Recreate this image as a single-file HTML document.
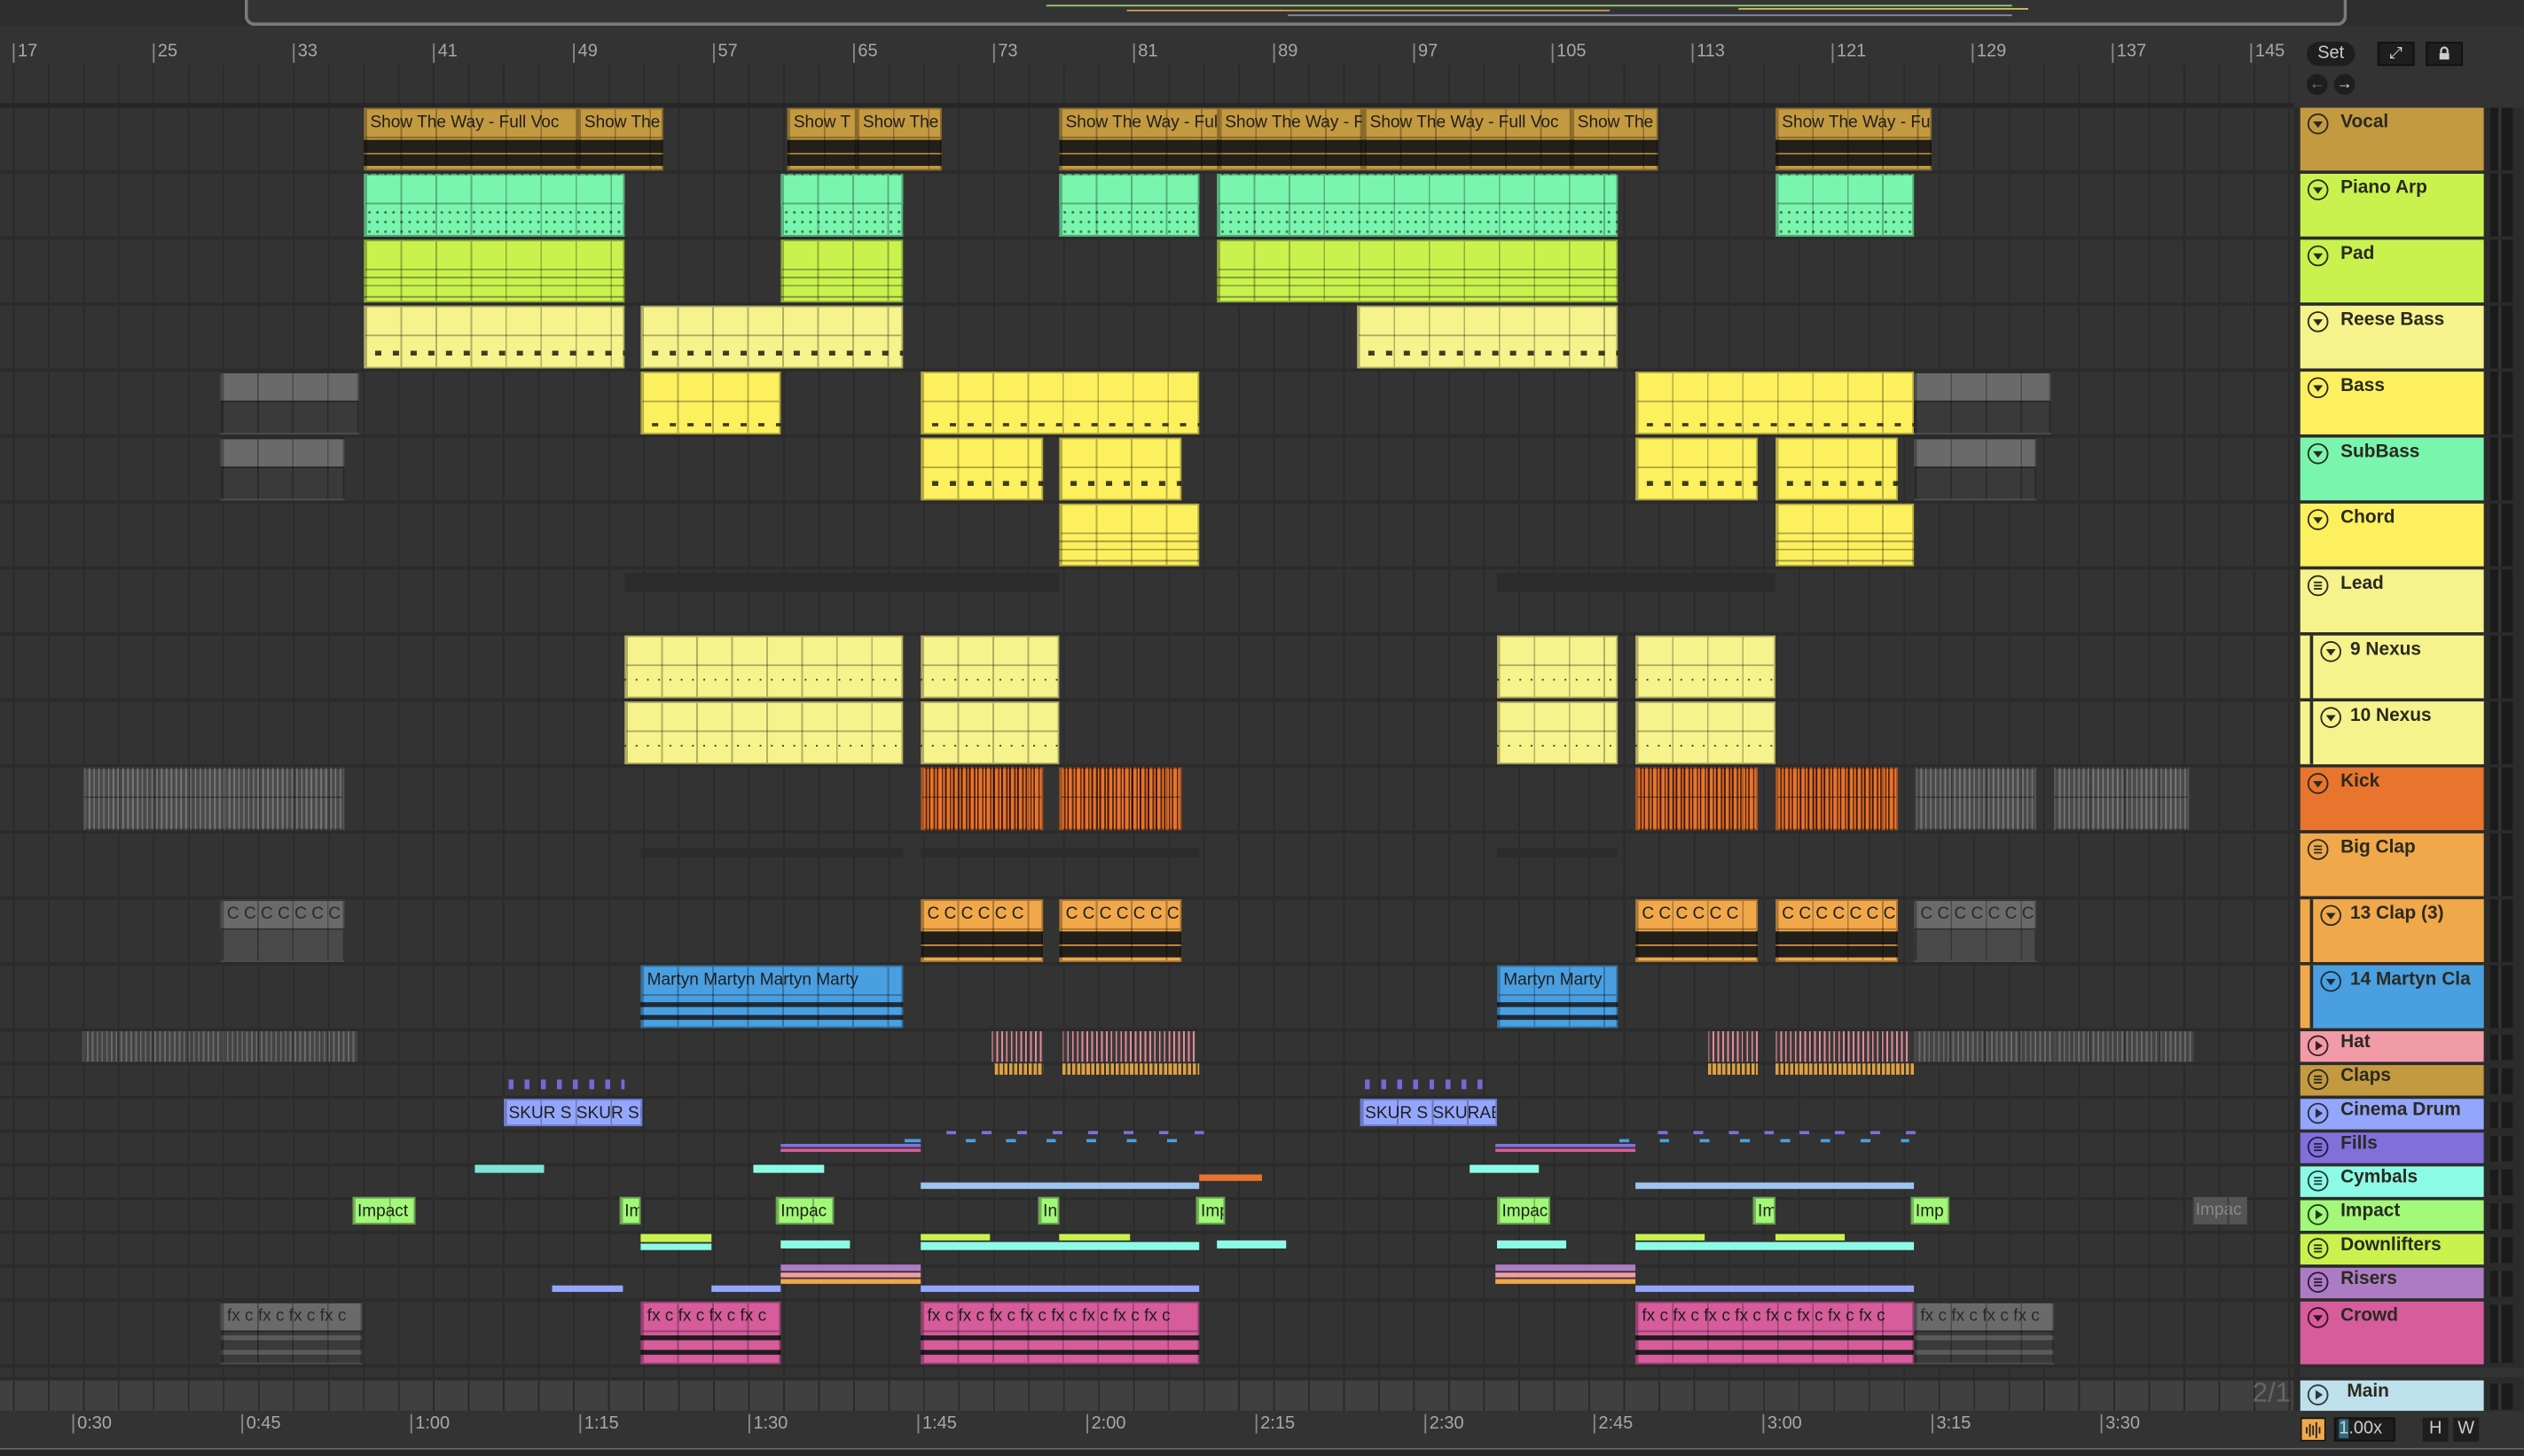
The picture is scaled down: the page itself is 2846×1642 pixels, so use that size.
<!DOCTYPE html>
<html><head><meta charset="utf-8"><style>
*{margin:0;padding:0}
html,body{width:2846px;height:1642px;overflow:hidden;background:#2b2b2b}
#s{position:absolute;left:0;top:0;width:1568px;height:905px;transform:scale(1.81505,1.81436);transform-origin:0 0;background:#2b2b2b;font-family:"Liberation Sans",sans-serif}
.a{position:absolute;box-sizing:border-box}
.lane{position:absolute;left:0;width:1425px;background:#333 repeating-linear-gradient(90deg,#2a2a2a 0 1px,transparent 1px 21.75px);background-position:8px 0}
.c{position:absolute;box-sizing:border-box;overflow:hidden;white-space:nowrap;font-size:10.5px;line-height:16px;color:#1e1e1e;padding-left:3px;border:1px solid rgba(0,0,0,.3);height:39px}
.c::before{content:"";position:absolute;left:0;right:0;top:0;bottom:0;background:repeating-linear-gradient(90deg,rgba(0,0,0,.28) 0 1px,transparent 1px 21.75px)}
.c::after{content:"";position:absolute;left:0;right:0;top:17px;height:1px;background:rgba(0,0,0,.3)}
.au{background-image:linear-gradient(transparent 0 19px,#231f1a 19px 27px,transparent 27px 28px,#231f1a 28px 35px,transparent 35px)}
.mi{background-image:repeating-linear-gradient(90deg,transparent 0 6px,rgba(0,0,0,.75) 6px 10px,transparent 10px 11px)}
.mi2{background-image:linear-gradient(transparent 0 22px,rgba(0,0,0,.35) 22px 23px,transparent 23px 27px,rgba(0,0,0,.35) 27px 28px,transparent 28px 34px,rgba(0,0,0,.35) 34px 35px,transparent 35px)}
.dots{background-image:linear-gradient(#7af5ae 0 18px,transparent 18px),radial-gradient(circle,rgba(0,0,0,.5) 0.7px,transparent 1px);background-size:100% 100%,5px 6px;background-position:0 0,0 20px}
.g{background-color:#5c5c5c!important;color:#2a2a2a}
.st{height:19px;border:none;padding:0}
.st::after{display:none}
.b{position:absolute;height:4px}
.h{position:absolute;left:1429px;width:114px;box-sizing:border-box;font-weight:bold;font-size:11.5px;color:#2a2a20;padding-left:25px;line-height:19px}
.h svg{position:absolute;left:4px;top:3px}
.m{position:absolute;left:1547px;width:14px;background:repeating-linear-gradient(90deg,#1b1b1b 0 5px,#333 5px 7px,#1b1b1b 7px 12px,transparent 12px)}
.rn{position:absolute;top:27px;font-family:"Liberation Sans Narrow","Liberation Sans",sans-serif;font-size:11px;color:#a8a8a8;border-left:1px solid #888;padding-left:2px;line-height:11px;height:12px}
.bt{position:absolute;top:879px;font-family:"Liberation Sans Narrow","Liberation Sans",sans-serif;font-size:11px;color:#a8a8a8;border-left:1px solid #888;padding-left:2px;line-height:12px}
</style></head><body><div id="s">

<div class="a" style="left:0;top:0;width:1568px;height:16px;background:#2d2d2d"></div>
<div class="a" style="left:152px;top:0;width:1306px;height:16px;border:2px solid #7a7a7a;border-top:none;border-radius:0 0 6px 6px;background:#333"></div>
<div class="a" style="left:650px;top:3px;width:600px;height:1px;background:#9c7"></div>
<div class="a" style="left:700px;top:6px;width:300px;height:1px;background:#c9a050"></div>
<div class="a" style="left:800px;top:9px;width:450px;height:1px;background:#88a"></div>
<div class="a" style="left:1080px;top:5px;width:180px;height:1px;background:#d8c060"></div>

<div class="a" style="left:0;top:16px;width:1425px;height:50px;background:#333 repeating-linear-gradient(90deg,#2a2a2a 0 1px,transparent 1px 21.75px);background-position:8px 0"></div>
<div class="a" style="left:0;top:16px;width:1425px;height:24px;background:#333"></div>
<div class="a" style="left:0;top:64px;width:1568px;height:3px;background:#262626"></div>
<div class="rn" style="left:8px">17</div><div class="rn" style="left:95px">25</div><div class="rn" style="left:182px">33</div><div class="rn" style="left:269px">41</div><div class="rn" style="left:356px">49</div><div class="rn" style="left:443px">57</div><div class="rn" style="left:530px">65</div><div class="rn" style="left:617px">73</div><div class="rn" style="left:704px">81</div><div class="rn" style="left:791px">89</div><div class="rn" style="left:878px">97</div><div class="rn" style="left:964px">105</div><div class="rn" style="left:1051px">113</div><div class="rn" style="left:1138px">121</div><div class="rn" style="left:1225px">129</div><div class="rn" style="left:1312px">137</div><div class="rn" style="left:1398px">145</div>

<div class="a" style="left:1425px;top:16px;width:143px;height:51px;background:#333"></div>
<div class="a" style="left:1433px;top:26px;width:30px;height:15px;background:#1e1e1e;border-radius:8px;color:#ccc;font-size:11px;line-height:15px;text-align:center">Set</div>
<div class="a" style="left:1477px;top:26px;width:23px;height:15px;background:#1e1e1e;border:1px solid #111;color:#ddd;font-size:10px;line-height:13px;text-align:center">⤢</div>
<div class="a" style="left:1507px;top:26px;width:23px;height:15px;background:#1e1e1e;border:1px solid #111"><svg width="21" height="13" viewBox="0 0 21 13"><rect x="7.5" y="6" width="6" height="4" fill="#ccc"/><path d="M8.5 6V4.5a2 2 0 0 1 4 0V6" stroke="#ccc" fill="none" stroke-width="1.2"/></svg></div>
<div class="a" style="left:1433px;top:46px;width:13px;height:13px;background:#1e1e1e;border-radius:50%;color:#777;font-size:10px;line-height:13px;text-align:center">←</div>
<div class="a" style="left:1450px;top:46px;width:13px;height:13px;background:#1e1e1e;border-radius:50%;color:#ddd;font-size:10px;line-height:13px;text-align:center">→</div>

<div class="lane" style="top:67px;height:39px"></div>
<div class="lane" style="top:108px;height:39px"></div>
<div class="lane" style="top:149px;height:39px"></div>
<div class="lane" style="top:190px;height:39px"></div>
<div class="lane" style="top:231px;height:39px"></div>
<div class="lane" style="top:272px;height:39px"></div>
<div class="lane" style="top:313px;height:39px"></div>
<div class="lane" style="top:354px;height:39px"></div>
<div class="lane" style="top:395px;height:39px"></div>
<div class="lane" style="top:436px;height:39px"></div>
<div class="lane" style="top:477px;height:39px"></div>
<div class="lane" style="top:518px;height:39px"></div>
<div class="lane" style="top:559px;height:39px"></div>
<div class="lane" style="top:600px;height:39px"></div>
<div class="lane" style="top:641px;height:19px"></div>
<div class="lane" style="top:662px;height:19px"></div>
<div class="lane" style="top:683px;height:19px"></div>
<div class="lane" style="top:704px;height:19px"></div>
<div class="lane" style="top:725px;height:19px"></div>
<div class="lane" style="top:746px;height:19px"></div>
<div class="lane" style="top:767px;height:19px"></div>
<div class="lane" style="top:788px;height:19px"></div>
<div class="lane" style="top:809px;height:39px"></div>
<div class="lane" style="top:850px;height:6px"></div>
<div class="lane" style="top:858px;height:19px;background-color:#404040"></div>
<div class="a" style="left:1375px;top:856px;width:48px;height:20px;color:#666;font-size:17px;text-align:right">2/1</div>

<!-- Vocal -->
<div class="c au" style="left:226px;top:67px;width:133px;background-color:#c49a41">Show The Way - Full Voc</div>
<div class="c au" style="left:359px;top:67px;width:53px;background-color:#c49a41">Show The</div>
<div class="c au" style="left:489px;top:67px;width:43px;background-color:#c49a41">Show T</div>
<div class="c au" style="left:532px;top:67px;width:53px;background-color:#c49a41">Show The</div>
<div class="c au" style="left:658px;top:67px;width:99px;background-color:#c49a41">Show The Way - Full</div>
<div class="c au" style="left:757px;top:67px;width:90px;background-color:#c49a41">Show The Way - Full</div>
<div class="c au" style="left:847px;top:67px;width:129px;background-color:#c49a41">Show The Way - Full Voc</div>
<div class="c au" style="left:976px;top:67px;width:54px;background-color:#c49a41">Show The</div>
<div class="c au" style="left:1103px;top:67px;width:97px;background-color:#c49a41">Show The Way - Full</div>

<!-- Piano Arp -->
<div class="c dots" style="left:226px;top:108px;width:162px;background-color:#7af5ae"></div>
<div class="c dots" style="left:485px;top:108px;width:76px;background-color:#7af5ae"></div>
<div class="c dots" style="left:658px;top:108px;width:87px;background-color:#7af5ae"></div>
<div class="c dots" style="left:756px;top:108px;width:249px;background-color:#7af5ae"></div>
<div class="c dots" style="left:1103px;top:108px;width:86px;background-color:#7af5ae"></div>

<!-- Pad -->
<div class="c mi2" style="left:226px;top:149px;width:162px;background-color:#c9f24f"></div>
<div class="c mi2" style="left:485px;top:149px;width:76px;background-color:#c9f24f"></div>
<div class="c mi2" style="left:756px;top:149px;width:249px;background-color:#c9f24f"></div>

<!-- Reese -->
<div class="c mi" style="left:226px;top:190px;width:162px;background-color:#f6f38c;background-size:11px 3px;background-repeat:repeat-x;background-position:0 27px"></div>
<div class="c mi" style="left:398px;top:190px;width:163px;background-color:#f6f38c;background-size:11px 3px;background-repeat:repeat-x;background-position:0 27px"></div>
<div class="c mi" style="left:843px;top:190px;width:162px;background-color:#f6f38c;background-size:11px 3px;background-repeat:repeat-x;background-position:0 27px"></div>

<!-- Bass -->
<div class="c g" style="left:137px;top:231px;width:86px;background:linear-gradient(#6a6a6a 0 17px,#3a3a3a 17px)"></div>
<div class="c mi" style="left:398px;top:231px;width:87px;background-color:#fdf05e;background-size:11px 2px;background-repeat:repeat-x;background-position:0 31px"></div>
<div class="c mi" style="left:572px;top:231px;width:173px;background-color:#fdf05e;background-size:11px 2px;background-repeat:repeat-x;background-position:0 31px"></div>
<div class="c mi" style="left:1016px;top:231px;width:173px;background-color:#fdf05e;background-size:11px 2px;background-repeat:repeat-x;background-position:0 31px"></div>
<div class="c g" style="left:1189px;top:231px;width:85px;background:linear-gradient(#6a6a6a 0 17px,#3a3a3a 17px)"></div>

<!-- SubBass -->
<div class="c g" style="left:137px;top:272px;width:77px;background:linear-gradient(#6a6a6a 0 17px,#3a3a3a 17px)"></div>
<div class="c mi" style="left:572px;top:272px;width:76px;background-color:#fdf05e;background-size:11px 3px;background-repeat:repeat-x;background-position:0 26px"></div>
<div class="c mi" style="left:658px;top:272px;width:76px;background-color:#fdf05e;background-size:11px 3px;background-repeat:repeat-x;background-position:0 26px"></div>
<div class="c mi" style="left:1016px;top:272px;width:76px;background-color:#fdf05e;background-size:11px 3px;background-repeat:repeat-x;background-position:0 26px"></div>
<div class="c mi" style="left:1103px;top:272px;width:76px;background-color:#fdf05e;background-size:11px 3px;background-repeat:repeat-x;background-position:0 26px"></div>
<div class="c g" style="left:1189px;top:272px;width:76px;background:linear-gradient(#6a6a6a 0 17px,#3a3a3a 17px)"></div>

<!-- Chord -->
<div class="c mi2" style="left:658px;top:313px;width:87px;background-color:#fdf05e"></div>
<div class="c mi2" style="left:1103px;top:313px;width:86px;background-color:#fdf05e"></div>

<div class="a" style="left:388px;top:356px;width:270px;height:12px;background:#2c2c2c"></div>
<div class="a" style="left:930px;top:356px;width:173px;height:12px;background:#2c2c2c"></div>

<!-- Nexus -->
<div class="c mi" style="left:388px;top:395px;width:173px;background-color:#f6f38c;background-size:7px 1px;background-repeat:repeat-x;background-position:0 26px"></div>
<div class="c mi" style="left:572px;top:395px;width:86px;background-color:#f6f38c;background-size:7px 1px;background-repeat:repeat-x;background-position:0 26px"></div>
<div class="c mi" style="left:930px;top:395px;width:75px;background-color:#f6f38c;background-size:7px 1px;background-repeat:repeat-x;background-position:0 26px"></div>
<div class="c mi" style="left:1016px;top:395px;width:87px;background-color:#f6f38c;background-size:7px 1px;background-repeat:repeat-x;background-position:0 26px"></div>
<div class="c mi" style="left:388px;top:436px;width:173px;background-color:#f6f38c;background-size:7px 1px;background-repeat:repeat-x;background-position:0 26px"></div>
<div class="c mi" style="left:572px;top:436px;width:86px;background-color:#f6f38c;background-size:7px 1px;background-repeat:repeat-x;background-position:0 26px"></div>
<div class="c mi" style="left:930px;top:436px;width:75px;background-color:#f6f38c;background-size:7px 1px;background-repeat:repeat-x;background-position:0 26px"></div>
<div class="c mi" style="left:1016px;top:436px;width:87px;background-color:#f6f38c;background-size:7px 1px;background-repeat:repeat-x;background-position:0 26px"></div>

<!-- Kick -->
<div class="c" style="left:51px;top:477px;width:163px;background:repeating-linear-gradient(90deg,#777 0 1px,#4a4a4a 1px 3px)"></div>
<div class="c" style="left:572px;top:477px;width:76px;background:repeating-linear-gradient(90deg,#e8742e 0 2px,#5a2a10 2px 3px,#e8742e 3px 4px,#3a1a08 4px 5px)"></div>
<div class="c" style="left:658px;top:477px;width:76px;background:repeating-linear-gradient(90deg,#e8742e 0 2px,#5a2a10 2px 3px,#e8742e 3px 4px,#3a1a08 4px 5px)"></div>
<div class="c" style="left:1016px;top:477px;width:76px;background:repeating-linear-gradient(90deg,#e8742e 0 2px,#5a2a10 2px 3px,#e8742e 3px 4px,#3a1a08 4px 5px)"></div>
<div class="c" style="left:1103px;top:477px;width:76px;background:repeating-linear-gradient(90deg,#e8742e 0 2px,#5a2a10 2px 3px,#e8742e 3px 4px,#3a1a08 4px 5px)"></div>
<div class="c" style="left:1189px;top:477px;width:76px;background:repeating-linear-gradient(90deg,#777 0 1px,#4a4a4a 1px 3px)"></div>
<div class="c" style="left:1275px;top:477px;width:85px;background:repeating-linear-gradient(90deg,#777 0 1px,#4a4a4a 1px 3px)"></div>

<div class="a" style="left:398px;top:527px;width:163px;height:6px;background:#2c2c2c"></div>
<div class="a" style="left:572px;top:527px;width:173px;height:6px;background:#2c2c2c"></div>
<div class="a" style="left:930px;top:527px;width:75px;height:6px;background:#2c2c2c"></div>

<!-- 13 Clap -->
<div class="c g au" style="left:137px;top:559px;width:77px;background:linear-gradient(#6a6a6a 0 17px,#4a4a4a 17px)">C C C C C C C</div>
<div class="c au" style="left:572px;top:559px;width:76px;background-color:#f0a84a">C C C C C C</div>
<div class="c au" style="left:658px;top:559px;width:76px;background-color:#f0a84a">C C C C C C C</div>
<div class="c au" style="left:1016px;top:559px;width:76px;background-color:#f0a84a">C C C C C C</div>
<div class="c au" style="left:1103px;top:559px;width:76px;background-color:#f0a84a">C C C C C C C</div>
<div class="c g" style="left:1189px;top:559px;width:76px;background:linear-gradient(#6a6a6a 0 17px,#4a4a4a 17px)">C C C C C C C</div>

<!-- Martyn -->
<div class="c" style="left:398px;top:600px;width:163px;background:linear-gradient(#4a9fe0 0 22px,#1e2a36 22px 25px,#4a9fe0 25px 30px,#1e2a36 30px 33px,#4a9fe0 33px)">Martyn Martyn Martyn Marty</div>
<div class="c" style="left:930px;top:600px;width:75px;background:linear-gradient(#4a9fe0 0 22px,#1e2a36 22px 25px,#4a9fe0 25px 30px,#1e2a36 30px 33px,#4a9fe0 33px)">Martyn Marty</div>

<!-- Hat -->
<div class="c st" style="left:51px;top:641px;width:171px;background:repeating-linear-gradient(90deg,#6a6a6a 0 1px,#444 1px 3px)"></div>
<div class="c st" style="left:616px;top:641px;width:32px;background:repeating-linear-gradient(90deg,#e58a98 0 1px,#3a3a3a 1px 3px)"></div>
<div class="c st" style="left:660px;top:641px;width:83px;background:repeating-linear-gradient(90deg,#e58a98 0 1px,#3a3a3a 1px 3px)"></div>
<div class="c st" style="left:1061px;top:641px;width:31px;background:repeating-linear-gradient(90deg,#e58a98 0 1px,#3a3a3a 1px 3px)"></div>
<div class="c st" style="left:1103px;top:641px;width:84px;background:repeating-linear-gradient(90deg,#e58a98 0 1px,#3a3a3a 1px 3px)"></div>
<div class="c st" style="left:1189px;top:641px;width:174px;background:repeating-linear-gradient(90deg,#6a6a6a 0 1px,#444 1px 3px)"></div>

<!-- Claps -->
<div class="b" style="left:618px;top:661px;width:30px;height:7px;background:repeating-linear-gradient(90deg,#e0a040 0 2px,#333 2px 3px)"></div>
<div class="b" style="left:660px;top:661px;width:85px;height:7px;background:repeating-linear-gradient(90deg,#e0a040 0 2px,#333 2px 3px)"></div>
<div class="b" style="left:1061px;top:661px;width:31px;height:7px;background:repeating-linear-gradient(90deg,#e0a040 0 2px,#333 2px 3px)"></div>
<div class="b" style="left:1103px;top:661px;width:86px;height:7px;background:repeating-linear-gradient(90deg,#e0a040 0 2px,#333 2px 3px)"></div>

<!-- Cinema -->
<div class="b" style="left:316px;top:671px;width:72px;height:6px;background:repeating-linear-gradient(90deg,#7a66d8 0 3px,transparent 3px 10px)"></div>
<div class="b" style="left:848px;top:671px;width:80px;height:6px;background:repeating-linear-gradient(90deg,#7a66d8 0 3px,transparent 3px 10px)"></div>
<div class="c st" style="left:313px;top:683px;width:86px;height:17px;background:#94a6fc;border:1px solid #6a7ad0;padding-left:2px;font-size:10.5px">SKUR S SKUR SK</div>
<div class="c st" style="left:845px;top:683px;width:85px;height:17px;background:#94a6fc;border:1px solid #6a7ad0;padding-left:2px;font-size:10.5px">SKUR S SKURAE</div>

<!-- Fills -->
<div class="b" style="left:485px;top:711px;width:87px;height:2px;background:#8170dc"></div>
<div class="b" style="left:485px;top:714px;width:87px;height:2px;background:#d65c9c"></div>
<div class="b" style="left:929px;top:711px;width:87px;height:2px;background:#8170dc"></div>
<div class="b" style="left:929px;top:714px;width:87px;height:2px;background:#d65c9c"></div>
<div class="b" style="left:562px;top:708px;width:10px;height:2px;background:#4a9fe0"></div>
<div class="b" style="left:588px;top:703px;width:160px;height:2px;background:repeating-linear-gradient(90deg,#8170dc 0 6px,transparent 6px 22px)"></div>
<div class="b" style="left:600px;top:708px;width:150px;height:2px;background:repeating-linear-gradient(90deg,#4a9fe0 0 6px,transparent 6px 25px)"></div>
<div class="b" style="left:1030px;top:703px;width:160px;height:2px;background:repeating-linear-gradient(90deg,#8170dc 0 6px,transparent 6px 22px)"></div>
<div class="b" style="left:1006px;top:708px;width:180px;height:2px;background:repeating-linear-gradient(90deg,#4a9fe0 0 6px,transparent 6px 25px)"></div>

<!-- Cymbals -->
<div class="b" style="left:295px;top:724px;width:43px;height:5px;background:#7ee6d4"></div>
<div class="b" style="left:468px;top:724px;width:44px;height:5px;background:#8cfbe6"></div>
<div class="b" style="left:913px;top:724px;width:43px;height:5px;background:#8cfbe6"></div>
<div class="b" style="left:745px;top:730px;width:39px;height:4px;background:#e8742e"></div>
<div class="b" style="left:572px;top:735px;width:173px;height:4px;background:#9ec4f0"></div>
<div class="b" style="left:1016px;top:735px;width:173px;height:4px;background:#9ec4f0"></div>

<!-- Impact -->
<div class="c st" style="left:219px;top:744px;width:39px;height:17px;background:#a2f878;border:1px solid #6aa050;padding-left:2px">Impact</div>
<div class="c st" style="left:385px;top:744px;width:13px;height:17px;background:#a2f878;border:1px solid #6aa050;padding-left:2px">Im</div>
<div class="c st" style="left:482px;top:744px;width:36px;height:17px;background:#a2f878;border:1px solid #6aa050;padding-left:2px">Impac</div>
<div class="c st" style="left:645px;top:744px;width:13px;height:17px;background:#a2f878;border:1px solid #6aa050;padding-left:2px">In</div>
<div class="c st" style="left:743px;top:744px;width:18px;height:17px;background:#a2f878;border:1px solid #6aa050;padding-left:2px">Imp</div>
<div class="c st" style="left:930px;top:744px;width:33px;height:17px;background:#a2f878;border:1px solid #6aa050;padding-left:2px">Impac</div>
<div class="c st" style="left:1089px;top:744px;width:14px;height:17px;background:#a2f878;border:1px solid #6aa050;padding-left:2px">Im</div>
<div class="c st" style="left:1187px;top:744px;width:24px;height:17px;background:#a2f878;border:1px solid #6aa050;padding-left:2px">Imp</div>
<div class="c st" style="left:1362px;top:744px;width:34px;height:17px;background:#555;color:#888;padding-left:2px">Impac</div>

<!-- Downlifters -->
<div class="b" style="left:398px;top:767px;width:44px;height:5px;background:#c9f24f"></div>
<div class="b" style="left:398px;top:773px;width:44px;height:4px;background:#8cfbe6"></div>
<div class="b" style="left:485px;top:771px;width:43px;height:5px;background:#8cfbe6"></div>
<div class="b" style="left:572px;top:767px;width:43px;height:4px;background:#c9f24f"></div>
<div class="b" style="left:658px;top:767px;width:44px;height:4px;background:#c9f24f"></div>
<div class="b" style="left:572px;top:772px;width:173px;height:5px;background:#8cfbe6"></div>
<div class="b" style="left:756px;top:771px;width:43px;height:5px;background:#8cfbe6"></div>
<div class="b" style="left:930px;top:771px;width:43px;height:5px;background:#8cfbe6"></div>
<div class="b" style="left:1016px;top:767px;width:43px;height:4px;background:#c9f24f"></div>
<div class="b" style="left:1103px;top:767px;width:43px;height:4px;background:#c9f24f"></div>
<div class="b" style="left:1016px;top:772px;width:173px;height:5px;background:#8cfbe6"></div>

<!-- Risers -->
<div class="b" style="left:343px;top:799px;width:44px;height:4px;background:#94a6fc"></div>
<div class="b" style="left:442px;top:799px;width:43px;height:4px;background:#94a6fc"></div>
<div class="b" style="left:485px;top:786px;width:87px;height:4px;background:#ad7bc4"></div>
<div class="b" style="left:485px;top:791px;width:87px;height:3px;background:#f19ba6"></div>
<div class="b" style="left:485px;top:795px;width:87px;height:3px;background:#f0a84a"></div>
<div class="b" style="left:929px;top:786px;width:87px;height:4px;background:#ad7bc4"></div>
<div class="b" style="left:929px;top:791px;width:87px;height:3px;background:#f19ba6"></div>
<div class="b" style="left:929px;top:795px;width:87px;height:3px;background:#f0a84a"></div>
<div class="b" style="left:572px;top:799px;width:173px;height:4px;background:#94a6fc"></div>
<div class="b" style="left:1016px;top:799px;width:173px;height:4px;background:#94a6fc"></div>

<!-- Crowd -->
<div class="c g" style="left:137px;top:809px;width:88px;background:linear-gradient(#6a6a6a 0 17px,#3a3a3a 17px 20px,#5a5a5a 20px 23px,#3a3a3a 23px 29px,#5a5a5a 29px 32px,#3a3a3a 32px);color:#2a2a2a">fx c fx c fx c fx c</div>
<div class="c" style="left:398px;top:809px;width:87px;background:linear-gradient(#d65c9c 0 20px,#1e1e1e 20px 23px,#d65c9c 23px 29px,#1e1e1e 29px 32px,#d65c9c 32px)">fx c fx c fx c fx c</div>
<div class="c" style="left:572px;top:809px;width:173px;background:linear-gradient(#d65c9c 0 20px,#1e1e1e 20px 23px,#d65c9c 23px 29px,#1e1e1e 29px 32px,#d65c9c 32px)">fx c fx c fx c fx c fx c fx c fx c fx c</div>
<div class="c" style="left:1016px;top:809px;width:173px;background:linear-gradient(#d65c9c 0 20px,#1e1e1e 20px 23px,#d65c9c 23px 29px,#1e1e1e 29px 32px,#d65c9c 32px)">fx c fx c fx c fx c fx c fx c fx c fx c</div>
<div class="c g" style="left:1189px;top:809px;width:87px;background:linear-gradient(#6a6a6a 0 17px,#3a3a3a 17px 20px,#5a5a5a 20px 23px,#3a3a3a 23px 29px,#5a5a5a 29px 32px,#3a3a3a 32px)">fx c fx c fx c fx c</div>

<!-- headers -->
<div class="a" style="left:1425px;top:67px;width:143px;height:812px;background:#2b2b2b"></div>
<div class="h" style="top:67px;height:39px;background:#c49a41"><svg width="14" height="14"><circle cx="7" cy="7" r="6" fill="none" stroke="#2a2a20"/><path d="M4 5.5h6L7 9.5z" fill="#2a2a20"/></svg>Vocal</div>
<div class="h" style="top:108px;height:39px;background:#c9f24f"><svg width="14" height="14"><circle cx="7" cy="7" r="6" fill="none" stroke="#2a2a20"/><path d="M4 5.5h6L7 9.5z" fill="#2a2a20"/></svg>Piano Arp</div>
<div class="h" style="top:149px;height:39px;background:#c9f24f"><svg width="14" height="14"><circle cx="7" cy="7" r="6" fill="none" stroke="#2a2a20"/><path d="M4 5.5h6L7 9.5z" fill="#2a2a20"/></svg>Pad</div>
<div class="h" style="top:190px;height:39px;background:#f6f38c"><svg width="14" height="14"><circle cx="7" cy="7" r="6" fill="none" stroke="#2a2a20"/><path d="M4 5.5h6L7 9.5z" fill="#2a2a20"/></svg>Reese Bass</div>
<div class="h" style="top:231px;height:39px;background:#fdf05e"><svg width="14" height="14"><circle cx="7" cy="7" r="6" fill="none" stroke="#2a2a20"/><path d="M4 5.5h6L7 9.5z" fill="#2a2a20"/></svg>Bass</div>
<div class="h" style="top:272px;height:39px;background:#7af5ae"><svg width="14" height="14"><circle cx="7" cy="7" r="6" fill="none" stroke="#2a2a20"/><path d="M4 5.5h6L7 9.5z" fill="#2a2a20"/></svg>SubBass</div>
<div class="h" style="top:313px;height:39px;background:#fdf05e"><svg width="14" height="14"><circle cx="7" cy="7" r="6" fill="none" stroke="#2a2a20"/><path d="M4 5.5h6L7 9.5z" fill="#2a2a20"/></svg>Chord</div>
<div class="h" style="top:354px;height:121px;background:#f6f38c"><svg width="14" height="14"><circle cx="7" cy="7" r="6" fill="none" stroke="#2a2a20"/><path d="M4.5 5h5M4.5 7h5M4.5 9h5" stroke="#2a2a20"/></svg>Lead</div>
<div class="h" style="top:395px;left:1435px;width:108px;height:39px;background:#f6f38c;border-left:2px solid #2b2b2b;padding-left:23px"><svg width="14" height="14"><circle cx="7" cy="7" r="6" fill="none" stroke="#2a2a20"/><path d="M4 5.5h6L7 9.5z" fill="#2a2a20"/></svg>9 Nexus</div>
<div class="h" style="top:436px;left:1435px;width:108px;height:39px;background:#f6f38c;border-left:2px solid #2b2b2b;padding-left:23px"><svg width="14" height="14"><circle cx="7" cy="7" r="6" fill="none" stroke="#2a2a20"/><path d="M4 5.5h6L7 9.5z" fill="#2a2a20"/></svg>10 Nexus</div>
<div class="a" style="left:1429px;top:393px;width:114px;height:2px;background:#2b2b2b"></div>
<div class="a" style="left:1429px;top:434px;width:114px;height:2px;background:#2b2b2b"></div>
<div class="h" style="top:477px;height:39px;background:#e8742e"><svg width="14" height="14"><circle cx="7" cy="7" r="6" fill="none" stroke="#2a2a20"/><path d="M4 5.5h6L7 9.5z" fill="#2a2a20"/></svg>Kick</div>
<div class="h" style="top:518px;height:121px;background:#f0a84a"><svg width="14" height="14"><circle cx="7" cy="7" r="6" fill="none" stroke="#2a2a20"/><path d="M4.5 5h5M4.5 7h5M4.5 9h5" stroke="#2a2a20"/></svg>Big Clap</div>
<div class="a" style="left:1429px;top:557px;width:114px;height:2px;background:#2b2b2b"></div>
<div class="a" style="left:1429px;top:598px;width:114px;height:2px;background:#2b2b2b"></div>
<div class="h" style="top:559px;left:1435px;width:108px;height:39px;background:#f0a84a;border-left:2px solid #2b2b2b;padding-left:23px"><svg width="14" height="14"><circle cx="7" cy="7" r="6" fill="none" stroke="#2a2a20"/><path d="M4 5.5h6L7 9.5z" fill="#2a2a20"/></svg>13 Clap (3)</div>
<div class="h" style="top:600px;left:1435px;width:108px;height:39px;background:#4a9fe0;border-left:2px solid #2b2b2b;padding-left:23px;overflow:hidden;white-space:nowrap"><svg width="14" height="14"><circle cx="7" cy="7" r="6" fill="none" stroke="#1a2a3a"/><path d="M4 5.5h6L7 9.5z" fill="#1a2a3a"/></svg>14 Martyn Cla</div>
<div class="h" style="top:641px;height:19px;background:#f19ba6;line-height:14px"><svg width="14" height="14" style="top:2px"><circle cx="7" cy="7" r="6" fill="none" stroke="#3a2020"/><path d="M5.5 4v6l4.5-3z" fill="#3a2020"/></svg>Hat</div>
<div class="h" style="top:662px;height:19px;background:#c49a41;line-height:14px"><svg width="14" height="14" style="top:2px"><circle cx="7" cy="7" r="6" fill="none" stroke="#2a2a20"/><path d="M4.5 5h5M4.5 7h5M4.5 9h5" stroke="#2a2a20"/></svg>Claps</div>
<div class="h" style="top:683px;height:19px;background:#94a6fc;line-height:14px"><svg width="14" height="14" style="top:2px"><circle cx="7" cy="7" r="6" fill="none" stroke="#2a2a40"/><path d="M5.5 4v6l4.5-3z" fill="#2a2a40"/></svg>Cinema Drum</div>
<div class="h" style="top:704px;height:19px;background:#8170dc;line-height:14px"><svg width="14" height="14" style="top:2px"><circle cx="7" cy="7" r="6" fill="none" stroke="#221a40"/><path d="M4.5 5h5M4.5 7h5M4.5 9h5" stroke="#221a40"/></svg>Fills</div>
<div class="h" style="top:725px;height:19px;background:#8cfbe6;line-height:14px"><svg width="14" height="14" style="top:2px"><circle cx="7" cy="7" r="6" fill="none" stroke="#203a36"/><path d="M4.5 5h5M4.5 7h5M4.5 9h5" stroke="#203a36"/></svg>Cymbals</div>
<div class="h" style="top:746px;height:19px;background:#a2f878;line-height:14px"><svg width="14" height="14" style="top:2px"><circle cx="7" cy="7" r="6" fill="none" stroke="#203a20"/><path d="M5.5 4v6l4.5-3z" fill="#203a20"/></svg>Impact</div>
<div class="h" style="top:767px;height:19px;background:#c9f24f;line-height:14px"><svg width="14" height="14" style="top:2px"><circle cx="7" cy="7" r="6" fill="none" stroke="#2a3010"/><path d="M4.5 5h5M4.5 7h5M4.5 9h5" stroke="#2a3010"/></svg>Downlifters</div>
<div class="h" style="top:788px;height:19px;background:#ad7bc4;line-height:14px"><svg width="14" height="14" style="top:2px"><circle cx="7" cy="7" r="6" fill="none" stroke="#2a1a36"/><path d="M4.5 5h5M4.5 7h5M4.5 9h5" stroke="#2a1a36"/></svg>Risers</div>
<div class="h" style="top:809px;height:39px;background:#d65c9c"><svg width="14" height="14"><circle cx="7" cy="7" r="6" fill="none" stroke="#3a1020"/><path d="M4 5.5h6L7 9.5z" fill="#3a1020"/></svg>Crowd</div>
<div class="a" style="left:1429px;top:850px;width:139px;height:6px;background:#333"></div>
<div class="h" style="top:858px;height:19px;background:#bde0ea;line-height:14px;padding-left:29px"><svg width="14" height="14" style="top:2px"><circle cx="7" cy="7" r="6" fill="none" stroke="#2a3a40"/><path d="M5.5 4v6l4.5-3z" fill="#2a3a40"/></svg>Main</div>

<div class="m" style="top:67px;height:39px"></div><div class="m" style="top:108px;height:39px"></div><div class="m" style="top:149px;height:39px"></div><div class="m" style="top:190px;height:39px"></div><div class="m" style="top:231px;height:39px"></div><div class="m" style="top:272px;height:39px"></div><div class="m" style="top:313px;height:39px"></div><div class="m" style="top:354px;height:39px"></div><div class="m" style="top:395px;height:39px"></div><div class="m" style="top:436px;height:39px"></div><div class="m" style="top:477px;height:39px"></div><div class="m" style="top:518px;height:39px"></div><div class="m" style="top:559px;height:39px"></div><div class="m" style="top:600px;height:39px"></div>
<div class="m" style="top:643px;height:16px"></div><div class="m" style="top:664px;height:16px"></div><div class="m" style="top:685px;height:16px"></div><div class="m" style="top:706px;height:16px"></div><div class="m" style="top:727px;height:16px"></div><div class="m" style="top:748px;height:16px"></div><div class="m" style="top:769px;height:16px"></div><div class="m" style="top:790px;height:16px"></div><div class="m" style="top:811px;height:36px"></div><div class="m" style="top:860px;height:16px"></div>

<div class="a" style="left:0;top:877px;width:1568px;height:28px;background:#333"></div>
<div class="a" style="left:0;top:900px;width:1568px;height:5px;background:#2a2a2a;border-top:1px solid #666"></div>
<div class="bt" style="left:45px">0:30</div><div class="bt" style="left:150px">0:45</div><div class="bt" style="left:255px">1:00</div><div class="bt" style="left:360px">1:15</div><div class="bt" style="left:465px">1:30</div><div class="bt" style="left:570px">1:45</div><div class="bt" style="left:675px">2:00</div><div class="bt" style="left:780px">2:15</div><div class="bt" style="left:885px">2:30</div><div class="bt" style="left:990px">2:45</div><div class="bt" style="left:1095px">3:00</div><div class="bt" style="left:1200px">3:15</div><div class="bt" style="left:1305px">3:30</div>
<div class="a" style="left:1429px;top:881px;width:16px;height:15px;background:#f0a84a;border:1px solid #111"><svg width="14" height="13"><path d="M3 5v4M5 3v8M7 4v6M9 2v10M11 5v4" stroke="#222" stroke-width="1"/></svg></div>
<div class="a" style="left:1450px;top:881px;width:38px;height:15px;background:#1e1e1e;border:1px solid #111;color:#ccc;font-size:11px;line-height:13px;padding-left:2px"><span style="background:#2d6a80">1</span>.00x</div>
<div class="a" style="left:1505px;top:881px;width:16px;height:15px;background:#1e1e1e;color:#ccc;font-size:11px;line-height:15px;text-align:center">H</div>
<div class="a" style="left:1524px;top:881px;width:16px;height:15px;background:#1e1e1e;color:#ccc;font-size:11px;line-height:15px;text-align:center">W</div>

</div></body></html>
